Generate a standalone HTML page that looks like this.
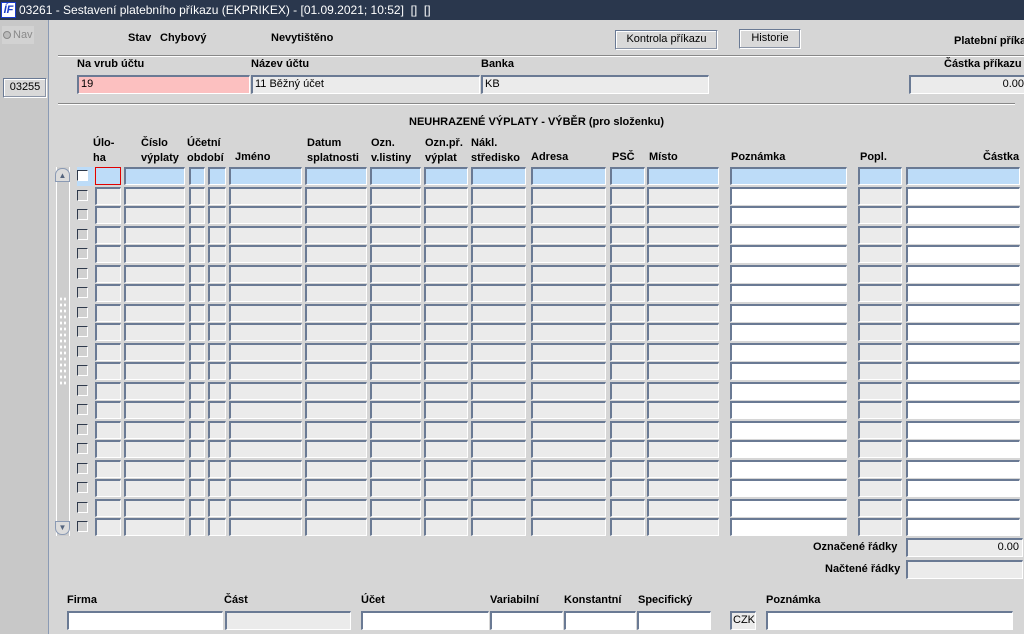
<!DOCTYPE html>
<html><head><meta charset="utf-8"><style>
*{margin:0;padding:0;box-sizing:border-box}
body{width:1024px;height:634px;overflow:hidden;background:#d6d6d6;font-family:"Liberation Sans",Arial,sans-serif;font-size:11px;color:#000;position:relative}
.a{position:absolute}
.b{font-weight:bold}
.f{position:absolute;background:#ebebeb;border-top:2px solid #6a7a94;border-left:2px solid #6a7a94;border-right:1px solid #fff;border-bottom:1px solid #fff;height:19px;padding-left:2px;line-height:15px;font-size:11px}
.g{height:18px}
.w{background:#fff}
.bl{background:#bddcf8}
.btn{position:absolute;height:20px;border:1px solid #6a7a94;border-right-color:#fff;border-bottom-color:#fff;box-shadow:inset -1px -1px 0 #8a94a6, inset 1px 1px 0 #fff;background:#d9d9d9;text-align:center;line-height:17px;font-size:11px}
.cb{position:absolute;width:11px;height:11px;background:#d0d0d0;border-top:1px solid #2f3a4c;border-left:1px solid #2f3a4c;border-right:1px solid #fff;border-bottom:1px solid #fff}
.hl{position:absolute;height:2px;border-top:1px solid #888;border-bottom:1px solid #fff}
</style></head><body>
<div class="a" style="left:0;top:0;width:1024px;height:20px;background:#2a374d;color:#fff;font-size:12px;line-height:20px;padding-left:19px">03261 - Sestavení platebního příkazu (EKPRIKEX) - [01.09.2021; 10:52] &nbsp;[] &nbsp;[]</div>
<div class="a" style="left:1px;top:2px;width:15px;height:16px;background:#fff;border:1px solid #1a3cc8;color:#1a3cc8;font:bold italic 11px 'Liberation Sans';line-height:14px;text-align:center">ÍF</div>
<div class="a" style="left:0;top:20px;width:48px;height:614px;background:#c8c8c8"></div>
<div class="a" style="left:48px;top:20px;width:1px;height:614px;background:#8a9ab4"></div>
<div class="a" style="left:2px;top:26px;width:32px;height:18px;background:#d2d2d2;color:#8a8a8a;line-height:18px;font-size:11px"><span style="display:inline-block;width:8px;height:8px;border-radius:50%;background:#bbb;border:1px solid #888;margin:0 2px 0 1px;vertical-align:-1px"></span>Nav</div>
<div class="btn" style="left:3px;top:78px;width:44px">03255</div>

<div class="a b" style="left:128px;top:32px">Stav</div>
<div class="a b" style="left:160px;top:32px">Chybový</div>
<div class="a b" style="left:271px;top:32px">Nevytištěno</div>
<div class="btn" style="left:615px;top:30px;width:103px">Kontrola příkazu</div>
<div class="btn" style="left:739px;top:29px;width:62px">Historie</div>
<div class="a b" style="left:954px;top:35px;white-space:nowrap">Platební příkaz</div>
<div class="hl" style="left:58px;top:55px;width:966px"></div>

<div class="a b" style="left:77px;top:58px">Na vrub účtu</div>
<div class="a b" style="left:251px;top:58px">Název účtu</div>
<div class="a b" style="left:481px;top:58px">Banka</div>
<div class="a b" style="left:944px;top:58px;white-space:nowrap">Částka příkazu</div>
<div class="f" style="left:77px;top:75px;width:173px;background:#fcc0c0">19</div>
<div class="f" style="left:251px;top:75px;width:229px">11 Běžný účet</div>
<div class="f" style="left:481px;top:75px;width:228px">KB</div>
<div class="f" style="left:909px;top:75px;width:120px;text-align:right;padding-right:4px">0.00</div>
<div class="hl" style="left:58px;top:103px;width:957px"></div>

<div class="a b" style="left:409px;top:116px">NEUHRAZENÉ VÝPLATY - VÝBĚR (pro složenku)</div>
<div class="a b" style="left:93px;top:136px;line-height:15px">Úlo-<br>ha</div>
<div class="a b" style="left:141px;top:136px;line-height:15px">Číslo<br>výplaty</div>
<div class="a b" style="left:187px;top:136px;line-height:15px">Účetní<br>období</div>
<div class="a b" style="left:235px;top:151px">Jméno</div>
<div class="a b" style="left:307px;top:136px;line-height:15px">Datum<br>splatnosti</div>
<div class="a b" style="left:371px;top:136px;line-height:15px">Ozn.<br>v.listiny</div>
<div class="a b" style="left:425px;top:136px;line-height:15px">Ozn.př.<br>výplat</div>
<div class="a b" style="left:471px;top:136px;line-height:15px">Nákl.<br>středisko</div>
<div class="a b" style="left:531px;top:151px">Adresa</div>
<div class="a b" style="left:612px;top:151px">PSČ</div>
<div class="a b" style="left:649px;top:151px">Místo</div>
<div class="a b" style="left:731px;top:151px">Poznámka</div>
<div class="a b" style="left:860px;top:151px">Popl.</div>
<div class="a b" style="left:983px;top:151px">Částka</div>

<div class="a" style="left:56px;top:167px;width:14px;height:369px;background:#cdcdcd;border-left:1px solid #fff;border-right:1px solid #fff"></div>
<div class="a" style="left:55px;top:168px;width:15px;height:14px;border:1px solid #8a9ab4;border-radius:7px 7px 0 0;background:#dcdcdc;color:#55657e;font-size:8px;text-align:center;line-height:13px">▲</div>
<div class="a" style="left:55px;top:521px;width:15px;height:14px;border:1px solid #8a9ab4;border-radius:0 0 7px 7px;background:#dcdcdc;color:#55657e;font-size:8px;text-align:center;line-height:12px">▼</div>
<div class="a" style="left:59px;top:296px;width:8px;height:90px;background-image:radial-gradient(#fff 1px,transparent 1.2px);background-size:4px 6px"></div>
<div class="a" style="left:77px;top:167px;width:17px;height:19px;background:#bddcf8"></div>
<div id="rows"></div>

<div class="a b" style="left:813px;top:541px">Označené řádky</div>
<div class="f" style="left:906px;top:538px;width:117px;text-align:right;padding-right:3px">0.00</div>
<div class="a b" style="left:825px;top:563px">Načtené řádky</div>
<div class="f" style="left:906px;top:560px;width:117px"></div>

<div class="a b" style="left:67px;top:594px">Firma</div>
<div class="a b" style="left:224px;top:594px">Část</div>
<div class="a b" style="left:361px;top:594px">Účet</div>
<div class="a b" style="left:490px;top:594px">Variabilní</div>
<div class="a b" style="left:564px;top:594px">Konstantní</div>
<div class="a b" style="left:638px;top:594px">Specifický</div>
<div class="a b" style="left:766px;top:594px">Poznámka</div>
<div class="f w" style="left:67px;top:611px;width:156px"></div>
<div class="f" style="left:225px;top:611px;width:126px"></div>
<div class="f w" style="left:361px;top:611px;width:128px"></div>
<div class="f w" style="left:490px;top:611px;width:73px"></div>
<div class="f w" style="left:564px;top:611px;width:72px"></div>
<div class="f w" style="left:637px;top:611px;width:74px"></div>
<div class="f" style="left:730px;top:611px;width:26px;padding-left:1px">CZK</div>
<div class="f w" style="left:766px;top:611px;width:247px"></div>

<script>
var cols=[[95,28],[124,63],[189,18],[208,20],[229,75],[305,64],[370,53],[424,46],[471,57],[531,77],[610,37],[647,74],[730,119],[858,46],[906,116]];
var h='';
for(var r=0;r<19;r++){
 var y=167+Math.round(r*19.5);
 h+='<div class="cb" style="left:77px;top:'+(y+3)+'px'+(r==0?';background:#fff':'')+'"></div>';
 for(var c=0;c<cols.length;c++){
  var cls='f g';
  if(r==0)cls+=' bl';else if(c==12||c==14)cls+=' w';
  var st='left:'+cols[c][0]+'px;top:'+y+'px;width:'+(cols[c][1]-2)+'px';
  if(r==0&&c==0)st+=';border:1px solid #e00000;background:#bddcf8';
  h+='<div class="'+cls+'" style="'+st+'"></div>';
 }
}
document.getElementById('rows').innerHTML=h;
</script>
</body></html>
